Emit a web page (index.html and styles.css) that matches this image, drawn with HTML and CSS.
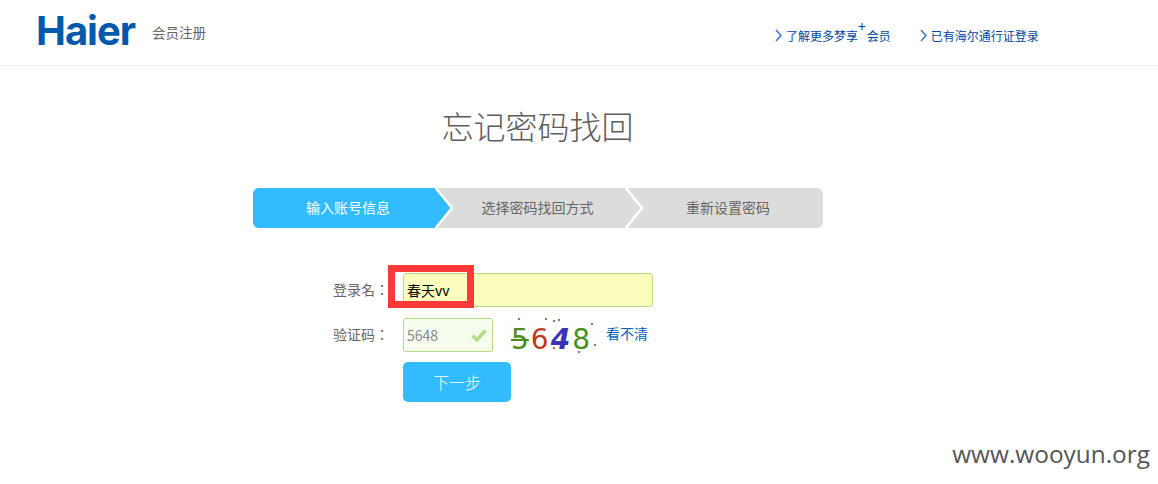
FILE: index.html
```html
<!DOCTYPE html>
<html lang="zh-CN">
<head>
  <meta charset="UTF-8" />
  <title>忘记密码找回</title>
  <link rel="stylesheet" href="styles.css">
</head>
<body>

  <div class="header">
    <div class="logo">Haier</div>
    <div class="header-title">会员注册</div>
    <div class="header-links">
      <a class="header-link link-more">
        <svg class="link-arrow" width="7" height="13" viewBox="0 0 7 13"><path d="M1 1 L6 6.5 L1 12" fill="none" stroke="#3a78c0" stroke-width="1.5"/></svg>
        <span>了解更多梦享<sup class="plus">+</sup>会员</span>
      </a>
      <a class="header-link">
        <svg class="link-arrow" width="7" height="13" viewBox="0 0 7 13"><path d="M1 1 L6 6.5 L1 12" fill="none" stroke="#3a78c0" stroke-width="1.5"/></svg>
        <span>已有海尔通行证登录</span>
      </a>
    </div>
  </div>

  <h1 class="title">忘记密码找回</h1>

  <div class="steps">
    <div class="step step-first active">
      输入账号信息
      <svg class="step-arrow" width="20" height="40" viewBox="0 0 20 40">
        <path d="M0 0 L17 20 L0 40 Z" fill="#33bbff"/>
        <path d="M0 -1 L17 20 L0 41" fill="none" stroke="#fff" stroke-width="2.5"/>
      </svg>
    </div>
    <div class="step step-second">
      选择密码找回方式
      <svg class="step-arrow" width="20" height="40" viewBox="0 0 20 40">
        <path d="M0 0 L17 20 L0 40 Z" fill="#dcdcdc"/>
        <path d="M0 -1 L17 20 L0 41" fill="none" stroke="#fff" stroke-width="2.5"/>
      </svg>
    </div>
    <div class="step step-third">重新设置密码</div>
  </div>

  <div class="form">
    <div class="form-row row-name">
      <label class="form-label" lang="zh-TW">登录名：</label>
      <div class="name-wrap">
        <div class="input input-name">春天vv</div>
        <div class="red-box"></div>
      </div>
    </div>
    <div class="form-row row-code">
      <label class="form-label" lang="zh-TW">验证码：</label>
      <div class="input input-code">
        5648
        <svg class="check" width="16" height="14" viewBox="0 0 16 14"><path d="M1.5 7.5 L6 12 L14.5 2.5" fill="none" stroke="#b5dd85" stroke-width="3.6"/></svg>
      </div>
      <div class="captcha">
        <span class="digit d1">5</span><span class="digit d2">6</span><span class="digit d3">4</span><span class="digit d4">8</span>
        <i class="dot" style="left: 15px; top: 0"></i>
        <i class="dot" style="left: 42px; top: 0"></i>
        <i class="dot" style="left: 50px; top: 2px"></i>
        <i class="dot" style="left: 55px; top: 1px"></i>
        <i class="dot" style="left: 88px; top: 5px"></i>
        <i class="dot" style="left: 91px; top: 26px"></i>
        <i class="dot" style="left: 75px; top: 33px"></i>
        <i class="dot" style="left: 50px; top: 29px"></i>
      </div>
      <a class="refresh">看不清</a>
    </div>
    <button class="btn">下一步</button>
  </div>

  <div class="watermark">www.wooyun.org</div>

</body>
</html>
```

FILE: styles.css
```css
body {
  margin: 0;
  height: 484px;
  position: relative;
  overflow: hidden;
  font-family: "Noto Sans CJK SC", "Liberation Sans", sans-serif;
  background-color: #fff;
  color: #666;
}

.header {
  display: flex;
  align-items: center;
  height: 65px;
  padding-left: 36px;
  border-bottom: 1px solid #eee;
}

.logo {
  width: 116px;
  padding-bottom: 4px;
  font-family: "Inter", "Liberation Sans", sans-serif;
  font-size: 40px;
  font-weight: 700;
  letter-spacing: -1px;
  color: #0059ab;
}

.header-title {
  width: 56px;
  padding-bottom: 2px;
  font-size: 13.5px;
  color: #666;
}

.header-links {
  display: flex;
  margin-left: 567px;
  padding-top: 6px;
}

.header-link {
  display: flex;
  align-items: center;
  font-size: 12px;
  line-height: 20px;
  color: #00479d;
}

.link-arrow {
  margin-right: 4px;
}

.link-more {
  margin-right: 29px;
}

.plus {
  font-size: 14px;
  line-height: 0;
  margin-right: 1px;
  vertical-align: 9px;
}

.title {
  margin: 37px 0 0;
  padding-right: 83px;
  text-align: center;
  font-size: 32px;
  font-weight: 300;
  line-height: 44px;
  color: #5c5c5c;
}

.steps {
  display: flex;
  width: 570px;
  height: 40px;
  margin: 41px 0 0 253px;
  border-radius: 6px;
  overflow: hidden;
  background-color: #dcdcdc;
  font-size: 14px;
  line-height: 38px;
  text-align: center;
}

.step {
  position: relative;
  box-sizing: border-box;
}

.step.active {
  background-color: #33bbff;
  color: #fff;
}

.step-first {
  width: 182px;
  padding-left: 8px;
}

.step-second {
  width: 190px;
  padding-left: 15px;
}

.step-third {
  flex: 1;
  padding-left: 8px;
}

.step-arrow {
  position: absolute;
  left: 100%;
  top: 0;
  z-index: 1;
}

.form {
  margin: 45px 0 0 333px;
}

.form-row {
  display: flex;
  align-items: center;
}

.row-code {
  margin-top: 11px;
}

.form-label {
  width: 70px;
  padding-bottom: 2px;
  font-family: "Noto Sans CJK TC", sans-serif;
  font-size: 14px;
  color: #666;
}

.name-wrap {
  position: relative;
}

.input {
  box-sizing: border-box;
  height: 34px;
  border: 1px solid #b5dd85;
  border-radius: 3px;
  padding-left: 3px;
  font-size: 14px;
  line-height: 32px;
}

.input-name {
  width: 250px;
  background-color: #fafdbb;
  color: #000;
}

.red-box {
  position: absolute;
  left: -15px;
  top: -8px;
  width: 72px;
  height: 29px;
  border: 7px solid #ff3838;
}

.input-code {
  position: relative;
  width: 90px;
  background-color: #f6fdef;
  color: #888;
}

.check {
  position: absolute;
  right: 5px;
  top: 9px;
}

.captcha {
  position: relative;
  display: flex;
  justify-content: center;
  gap: 2px;
  box-sizing: border-box;
  width: 95px;
  height: 34px;
  margin-left: 10px;
  padding-top: 5px;
  background-color: #fffdfd;
  font-family: "DejaVu Sans", sans-serif;
  font-size: 28px;
  line-height: 34px;
}

.digit {
  display: block;
}

.d1 { color: #4a8f1c; text-decoration: line-through; text-decoration-thickness: 2px; }
.d2 { color: #c0391b; }
.d3 { color: #3b32b8; font-style: italic; font-weight: 700; }
.d4 { color: #4a8f1c; }

.dot {
  position: absolute;
  width: 2px;
  height: 2px;
  background-color: #a5705a;
}

.refresh {
  margin-left: 8px;
  padding-bottom: 4px;
  font-size: 14px;
  color: #005fb8;
}

.btn {
  display: block;
  width: 108px;
  height: 40px;
  margin: 10px 0 0 70px;
  border: none;
  border-radius: 5px;
  background-color: #33bbff;
  color: #fff;
  font-family: inherit;
  font-size: 16px;
  font-weight: 300;
}

.watermark {
  position: absolute;
  right: 8px;
  bottom: 13px;
  font-family: "Open Sans", sans-serif;
  font-size: 24.4px;
  line-height: 34px;
  color: #555;
}
```
